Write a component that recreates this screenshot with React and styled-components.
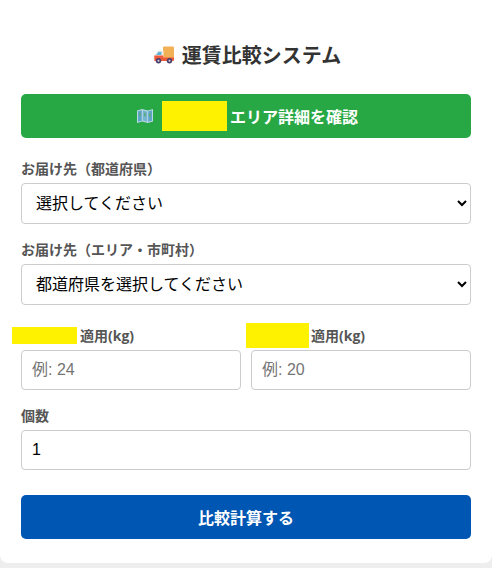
import React from 'react';
import styled, { createGlobalStyle } from 'styled-components';

const GlobalStyle = createGlobalStyle`
  html, body {
    margin: 0;
    height: 100%;
    background: #eeeeee;
    overflow: hidden;
  }
  body, input, select, button {
    font-family: "Liberation Sans", "Noto Sans CJK JP", sans-serif;
  }
`;

const Card = styled.main`
  box-sizing: border-box;
  width: 492px;
  height: 563px;
  padding: 41px 21px 24px;
  background: #fff;
  border-radius: 0 0 8px 8px;
`;

const Title = styled.h1`
  display: flex;
  align-items: center;
  justify-content: center;
  gap: 8px;
  height: 28px;
  margin: 0 0 25px;
  padding-left: 3px;
  color: #333;
  font-family: "Noto Sans CJK JP", sans-serif;
  font-size: 20px;
  font-weight: 700;
  line-height: 28px;
`;

const ActionButton = styled.button`
  display: flex;
  align-items: center;
  justify-content: center;
  width: 100%;
  height: ${props => props.$height}px;
  padding: 0 0 0 ${props => props.$inset || 0}px;
  border: none;
  border-radius: 5px;
  background: ${props => props.$color};
  color: #fff;
  font-family: "Noto Sans CJK JP", sans-serif;
  font-size: 16px;
  font-weight: 700;
`;

const Redaction = styled.span`
  display: inline-block;
  flex: none;
  width: ${props => props.$width}px;
  height: ${props => props.$height}px;
  background: #fff200;
`;

const MapIconWrap = styled.span`
  display: flex;
  margin-right: 9px;
`;

const Field = styled.div`
  margin-top: ${props => props.$top || 0}px;
  min-width: 0;
`;

const Label = styled.label`
  display: flex;
  align-items: center;
  height: 20px;
  margin-bottom: 5px;
  margin-left: ${props => props.$shift || 0}px;
  color: #555;
  font-family: "Open Sans", "Noto Sans CJK JP", sans-serif;
  font-size: 14px;
  font-weight: 700;
  white-space: nowrap;
`;

const LabelText = styled.span`
  margin-left: ${props => props.$gap}px;
`;

const Select = styled.select`
  display: block;
  box-sizing: border-box;
  width: 100%;
  height: 41px;
  padding: 0 10px;
  border: 1px solid #ccc;
  border-radius: 4px;
  background: #fff;
  color: #000;
  font-size: 16px;
`;

const Input = styled.input`
  display: block;
  box-sizing: border-box;
  width: 100%;
  height: 40px;
  padding: 0 10px;
  border: 1px solid #ccc;
  border-radius: 4px;
  background: #fff;
  color: #000;
  font-size: 16px;

  &::placeholder {
    color: #757575;
  }
`;

const Row = styled.div`
  display: grid;
  grid-template-columns: 220px 220px;
  gap: 10px;
  margin-top: 20px;
`;

const SubmitArea = styled.div`
  margin-top: 25px;
`;

function TruckIcon() {
  return (
    <svg width="20" height="18" viewBox="0 0 20 18" aria-hidden="true">
      <path d="M9 1.500a1 1 0 0 1 1-1h9a1 1 0 0 1 1 1V13H9z" fill="#f2b155" />
      <path d="M4 4.500h5.500V12H0.300V9z" fill="#f3efe6" />
      <path d="M4.500 5.800h3V9H2z" fill="#5fb4d8" />
      <path d="M0.300 9.500h9V11.500H20v2.500a1 1 0 0 1-1 1H0.300z" fill="#ee5a3a" />
      <circle cx="4.500" cy="14.800" r="2.700" fill="#4b3f6b" />
      <circle cx="4.500" cy="14.800" r="1" fill="#d8d4e2" />
      <circle cx="15.500" cy="14.800" r="2.700" fill="#4b3f6b" />
      <circle cx="15.500" cy="14.800" r="1" fill="#d8d4e2" />
    </svg>
  );
}

function MapIcon() {
  return (
    <svg width="16" height="14" viewBox="0 0 16 14" aria-hidden="true">
      <path d="M0 1.500 5.300 0l5.400 1.500L16 0v12.500L10.700 14l-5.400-1.500L0 14z" fill="#b9d9e6" />
      <path d="M1 2.300 4.800 1.200v10.500L1 12.800z" fill="#5ea6c8" />
      <path d="M5.800 1.200l4.400 1.200v10.400l-4.400-1.200z" fill="#74b6cf" />
      <path d="M11.200 2.300 15 1.200v10.500l-3.800 1.100z" fill="#5ea6c8" />
      <path d="M2 4l2-.6v3L2 7.500zM7 3.500l2 .6v3.400L7 7zM12 4.500l2-.6v3.500l-2 .7z" fill="#5fa98a" />
    </svg>
  );
}

export default function App() {
  return (
    <>
      <GlobalStyle />
      <Card>
        <Title>
          <TruckIcon />
          <span>運賃比較システム</span>
        </Title>

        <ActionButton type="button" $height={44} $color="#28a745" $inset={3}>
          <MapIconWrap>
            <MapIcon />
          </MapIconWrap>
          <Redaction $width={65} $height={30} />
          <LabelText $gap={3}>エリア詳細を確認</LabelText>
        </ActionButton>

        <Field $top={20}>
          <Label>お届け先（都道府県）</Label>
          <Select defaultValue="">
            <option value="">選択してください</option>
          </Select>
        </Field>

        <Field $top={15}>
          <Label>お届け先（エリア・市町村）</Label>
          <Select defaultValue="">
            <option value="">都道府県を選択してください</option>
          </Select>
        </Field>

        <Row>
          <Field>
            <Label $shift={-9}>
              <Redaction $width={65} $height={17} />
              <LabelText $gap={3}>適用(kg)</LabelText>
            </Label>
            <Input type="number" placeholder="例: 24" />
          </Field>
          <Field>
            <Label $shift={-5}>
              <Redaction $width={63} $height={25} />
              <LabelText $gap={2}>適用(kg)</LabelText>
            </Label>
            <Input type="number" placeholder="例: 20" />
          </Field>
        </Row>

        <Field $top={15}>
          <Label>個数</Label>
          <Input type="number" defaultValue={1} />
        </Field>

        <SubmitArea>
          <ActionButton type="button" $height={44} $color="#0056b3">
            比較計算する
          </ActionButton>
        </SubmitArea>
      </Card>
    </>
  );
}
